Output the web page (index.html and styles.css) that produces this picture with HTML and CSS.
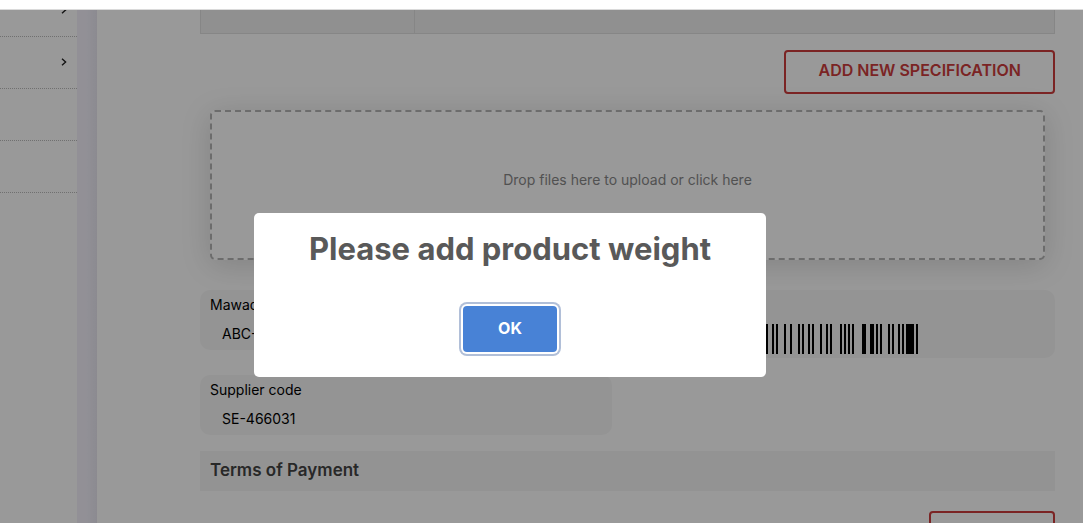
FILE: index.html
```html
<!DOCTYPE html>
<html lang="en">
<head>
<meta charset="utf-8">
<title>Product specification</title>
<link rel="stylesheet" href="styles.css">
</head>
<body>
<header class="topbar"></header>
<div class="page">
  <nav class="sidebar" aria-label="Main">
    <div class="side-item"><svg class="chevron" viewBox="0 0 6 8"><path d="M1 .8 4.6 4 1 7.2"/></svg></div>
    <div class="side-item"><svg class="chevron" viewBox="0 0 6 8"><path d="M1 .8 4.6 4 1 7.2"/></svg></div>
    <div class="side-item"></div>
    <div class="side-item"></div>
  </nav>
  <main class="content">
    <table class="spec-table"><tbody><tr><td class="spec-name"></td><td></td></tr></tbody></table>
    <div class="actions"><button class="btn-outline" type="button">ADD NEW SPECIFICATION</button></div>
    <button class="dropzone" type="button">Drop files here to upload or click here</button>
    <div class="cards">
      <section class="card">
        <h3 class="card-label">Mawad code</h3>
        <p class="card-value">ABC-</p>
      </section>
      <section class="card">
        <svg class="barcode" viewBox="0 0 253 30" role="img" aria-label="Barcode" shape-rendering="crispEdges">
          <path d="M101 0h2v30h-2zM107 0h2v30h-2zM111 0h2v30h-2zM119 0h2v30h-2zM125 0h2v30h-2zM133 0h2v30h-2zM137 0h2v30h-2zM143 0h2v30h-2zM147 0h2v30h-2zM155 0h2v30h-2zM161 0h2v30h-2zM165 0h2v30h-2zM175 0h2v30h-2zM179 0h2v30h-2zM183 0h2v30h-2zM187 0h2v30h-2zM197 0h4v30h-4zM205 0h4v30h-4zM211 0h2v30h-2zM215 0h2v30h-2zM223 0h2v30h-2zM227 0h2v30h-2zM233 0h2v30h-2zM237 0h2v30h-2zM241 0h8v30h-8zM251 0h2v30h-2z"/>
        </svg>
      </section>
      <section class="card">
        <h3 class="card-label">Supplier code</h3>
        <p class="card-value">SE-466031</p>
      </section>
    </div>
    <h2 class="section-title">Terms of Payment</h2>
    <div class="actions"><button class="btn-outline btn-small" type="button" aria-label="Add"></button></div>
  </main>
  <div class="overlay">
    <div class="modal" role="dialog" aria-modal="true" aria-labelledby="modal-title">
      <h1 class="modal-title" id="modal-title">Please add product weight</h1>
      <button class="btn-ok" type="button">OK</button>
    </div>
  </div>
</div>
</body>
</html>
```
FILE: styles.css
```css
* {
  box-sizing: border-box;
}

body {
  margin: 0;
  height: 100vh;
  display: flex;
  flex-direction: column;
  overflow: hidden;
  background: #fff;
  color: #000;
  font-family: Inter, "Open Sans", sans-serif;
  font-size: 14px;
}

h1, h2, h3, p {
  margin: 0;
}

button {
  font-family: inherit;
  cursor: pointer;
}

.topbar {
  flex: none;
  height: 10px;
  border-bottom: 1px solid #dadada;
}

.page {
  position: relative;
  flex: 1;
  min-height: 0;
  display: flex;
  overflow: hidden;
  background: linear-gradient(to right, #f3f1fb 86px, #e9e7f1 97px);
}

.sidebar {
  flex: none;
  width: 77px;
  margin-top: -25px;
  background: #fff;
}

.side-item {
  display: flex;
  align-items: center;
  justify-content: flex-end;
  height: 52px;
  padding: 0 10px 2px 0;
  border-bottom: 1px dotted #bbb;
}

.chevron {
  width: 6px;
  height: 8px;
  fill: none;
  stroke: #222;
  stroke-width: 1.4;
}

.content {
  flex: 1;
  min-width: 0;
  margin-left: 20px;
  padding: 0 28px 0 103px;
  background: #fff;
}

.spec-table {
  width: 100%;
  table-layout: fixed;
  border-collapse: collapse;
  background: #f0f0f0;
}

.spec-table td {
  height: 23px;
  padding: 0;
  border: 1px solid #dfdfdf;
  border-top: 0;
}

.spec-table .spec-name {
  width: 214px;
}

.actions {
  display: flex;
  justify-content: flex-end;
  margin: 16px 0;
}

.btn-outline {
  height: 44px;
  padding: 0 32px 4px;
  border: 2px solid #cd3c3c;
  border-radius: 4px;
  background: transparent;
  color: #cd3c3c;
  font-size: 16px;
  font-weight: 600;
}

.btn-small {
  width: 126px;
}

.dropzone {
  display: block;
  width: calc(100% - 20px);
  height: 150px;
  margin: 0 10px 30px;
  padding: 0 0 10px;
  border: 2px dashed #b4b4b4;
  border-radius: 5px;
  background: #fff;
  box-shadow: 0 5px 30px rgba(0, 0, 0, 0.15);
  color: #888;
  font-size: 14px;
}

.cards {
  display: grid;
  grid-template-columns: 1fr 1fr;
  align-items: start;
  gap: 17px 32px;
}

.card {
  padding: 5px 10px 6px;
  border-radius: 10px;
  background: #f7f7f7;
}

.card-label {
  font-size: 14px;
  font-weight: 400;
  line-height: 20px;
}

.card-value {
  padding: 9px 12px 0;
  line-height: 20px;
}

.barcode {
  display: block;
  width: 253px;
  height: 30px;
  margin: 29px 0 -2px 11px;
}

.section-title {
  margin: 16px 0 20px;
  padding: 7px 10px 9px;
  background: #f6f6f6;
  color: #444;
  font-size: 17px;
  font-weight: 600;
  line-height: 24px;
}

.overlay {
  position: absolute;
  inset: 0;
  display: flex;
  align-items: flex-start;
  justify-content: center;
  padding: 203px 63px 0 0;
  background: rgba(0, 0, 0, 0.4);
}

.modal {
  display: flex;
  flex-direction: column;
  align-items: center;
  width: 512px;
  max-width: 90%;
  padding: 16px 16px 25px;
  border-radius: 5px;
  background: #fff;
}

.modal-title {
  margin-bottom: 37px;
  color: #595959;
  font-size: 31px;
  font-weight: 700;
  line-height: 40px;
}

.btn-ok {
  width: 94px;
  height: 46px;
  padding: 0 0 2px;
  border: 0;
  border-radius: 4px;
  background: #4882d6;
  box-shadow: 0 0 0 2px #fff, 0 0 0 4px #b1bfd8;
  color: #fff;
  font-size: 16px;
  font-weight: 700;
}
```
